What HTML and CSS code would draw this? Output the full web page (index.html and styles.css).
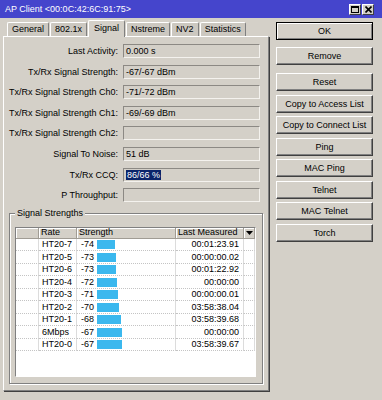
FILE: index.html
```html
<!DOCTYPE html>
<html lang="en">
<head>
    <meta charset="UTF-8">
    <meta name="viewport" content="width=device-width, initial-scale=1.0">
    <title>AP Client</title>
    <link rel="stylesheet" href="styles.css">
</head>
<body>
    <div class="window">
        <div class="titlebar">
            <span class="title">AP Client &lt;00:0C:42:6C:91:75&gt;</span>
            <span class="tb-btns">
                <span class="tb-btn"><svg width="8" height="7" viewBox="0 0 8 7"><rect x="0.5" y="0.5" width="7" height="6" fill="none" stroke="#000"/><line x1="0" y1="1.5" x2="8" y2="1.5" stroke="#000"/></svg></span>
                <span class="tb-btn"><svg width="7" height="7" viewBox="0 0 7 7"><path d="M0.5 0.5 L6.5 6.5 M6.5 0.5 L0.5 6.5" stroke="#000" stroke-width="1.6"/></svg></span>
            </span>
        </div>

        <div class="main">
            <div class="left">
                <div class="tabs">
                    <span class="tab">General</span>
                    <span class="tab">802.1x</span>
                    <span class="tab active">Signal</span>
                    <span class="tab">Nstreme</span>
                    <span class="tab">NV2</span>
                    <span class="tab">Statistics</span>
                </div>

                <div class="panel">
                    <div class="form">
                        <label>Last Activity:</label>
                        <div class="field">0.000 s</div>
                        <label>Tx/Rx Signal Strength:</label>
                        <div class="field">-67/-67 dBm</div>
                        <label>Tx/Rx Signal Strength Ch0:</label>
                        <div class="field">-71/-72 dBm</div>
                        <label>Tx/Rx Signal Strength Ch1:</label>
                        <div class="field">-69/-69 dBm</div>
                        <label>Tx/Rx Signal Strength Ch2:</label>
                        <div class="field"></div>
                        <label>Signal To Noise:</label>
                        <div class="field">51 dB</div>
                        <label>Tx/Rx CCQ:</label>
                        <div class="field"><span class="selected">86/66 %</span></div>
                        <label>P Throughput:</label>
                        <div class="field"></div>
                    </div>

                    <fieldset class="group">
                        <legend>Signal Strengths</legend>
                        <div class="list">
                            <table class="grid">
                                <colgroup>
                                    <col style="width:23px">
                                    <col style="width:38px">
                                    <col style="width:99px">
                                    <col style="width:68px">
                                    <col style="width:11px">
                                </colgroup>
                                <thead>
                                    <tr>
                                        <th></th>
                                        <th>Rate</th>
                                        <th>Strength</th>
                                        <th>Last Measured</th>
                                        <th class="menu"><svg width="7" height="4" viewBox="0 0 7 4"><path d="M0 0 H7 L3.5 4 Z" fill="#000"/></svg></th>
                                    </tr>
                                </thead>
                                <tbody>
                                    <tr><td></td><td>HT20-7</td><td><span class="val">-74</span><span class="bar" style="width:18px"></span></td><td class="time">00:01:23.91</td><td></td></tr>
                                    <tr><td></td><td>HT20-5</td><td><span class="val">-73</span><span class="bar" style="width:19px"></span></td><td class="time">00:00:00.02</td><td></td></tr>
                                    <tr><td></td><td>HT20-6</td><td><span class="val">-73</span><span class="bar" style="width:19px"></span></td><td class="time">00:01:22.92</td><td></td></tr>
                                    <tr><td></td><td>HT20-4</td><td><span class="val">-72</span><span class="bar" style="width:20px"></span></td><td class="time">00:00:00</td><td></td></tr>
                                    <tr><td></td><td>HT20-3</td><td><span class="val">-71</span><span class="bar" style="width:21px"></span></td><td class="time">00:00:00.01</td><td></td></tr>
                                    <tr><td></td><td>HT20-2</td><td><span class="val">-70</span><span class="bar" style="width:22px"></span></td><td class="time">03:58:38.04</td><td></td></tr>
                                    <tr><td></td><td>HT20-1</td><td><span class="val">-68</span><span class="bar" style="width:24px"></span></td><td class="time">03:58:39.68</td><td></td></tr>
                                    <tr><td></td><td>6Mbps</td><td><span class="val">-67</span><span class="bar" style="width:25px"></span></td><td class="time">00:00:00</td><td></td></tr>
                                    <tr><td></td><td>HT20-0</td><td><span class="val">-67</span><span class="bar" style="width:25px"></span></td><td class="time">03:58:39.67</td><td></td></tr>
                                </tbody>
                            </table>
                        </div>
                    </fieldset>
                </div>
            </div>

            <div class="buttons">
                <button class="btn ok">OK</button>
                <button class="btn remove">Remove</button>
                <button class="btn">Reset</button>
                <button class="btn">Copy to Access List</button>
                <button class="btn">Copy to Connect List</button>
                <button class="btn">Ping</button>
                <button class="btn">MAC Ping</button>
                <button class="btn">Telnet</button>
                <button class="btn">MAC Telnet</button>
                <button class="btn">Torch</button>
            </div>
        </div>
    </div>
</body>
</html>
```

FILE: styles.css
```css
* {
    margin: 0;
    padding: 0;
    box-sizing: border-box;
}

body {
    background: #d4d0c8;
    font-family: "Liberation Sans", Arial, sans-serif;
    font-size: 9px;
    color: #000;
}

.window {
    width: 382px;
    height: 400px;
    display: flex;
    flex-direction: column;
    background: #d4d0c8;
}

/* title bar */
.titlebar {
    height: 18px;
    background: #4545cc;
    color: #fff;
    display: flex;
    align-items: center;
    justify-content: space-between;
    padding: 0 8px 0 5px;
}

.tb-btns {
    display: flex;
    gap: 1px;
}

.tb-btn {
    width: 12px;
    height: 11px;
    background: #d4d0c8;
    border: 1px solid;
    border-color: #fff #404040 #404040 #fff;
    display: flex;
    align-items: center;
    justify-content: center;
}

.main {
    flex: 1;
    display: flex;
}

.left {
    width: 269px;
    padding-left: 3px;
    display: flex;
    flex-direction: column;
}

/* tabs */
.tabs {
    height: 18px;
    display: flex;
    align-items: flex-end;
    gap: 1px;
    padding-left: 4px;
}

.tab {
    height: 14px;
    line-height: 12px;
    padding: 0 4px;
    background: #ccc8c0;
    border: 1px solid;
    border-color: #fff #808080 transparent #fff;
    border-bottom: none;
    border-radius: 2px 2px 0 0;
}

.tab.active {
    height: 17px;
    line-height: 14px;
    padding: 0 5px;
    margin-bottom: -1px;
    background: #d4d0c8;
    position: relative;
    z-index: 1;
}

.panel {
    height: 355px;
    border: 1px solid;
    border-color: #fff #808080 #808080 #fff;
    box-shadow: 1px 1px 0 #404040;
}

/* read-only fields */
.form {
    display: grid;
    grid-template-columns: 116px 137px;
    column-gap: 3px;
    row-gap: 6.6px;
    align-items: center;
    padding-top: 7px;
}

.form label {
    text-align: right;
    padding-right: 2px;
    white-space: nowrap;
}

.field {
    height: 14px;
    line-height: 12px;
    padding: 0 2px;
    border: 1px solid;
    border-color: #8c8984 #f4f2ee #f4f2ee #8c8984;
    background: #d4d0c8;
    white-space: nowrap;
}

.selected {
    background: #0a246a;
    color: #fff;
    padding: 0 1px;
}

/* signal strengths group */
.group {
    width: 254px;
    margin: 6px 0 0 5px;
    padding: 7.5px 6px 6px 5px;
    border: 1px solid #808080;
    box-shadow: inset 1px 1px 0 #fff, 1px 1px 0 #fff;
}

.group legend {
    padding: 0 2px;
    line-height: 11px;
    background: #d4d0c8;
}

.list {
    height: 150px;
    background: #fff;
    border: 1px solid;
    border-color: #808080 #fff #fff #808080;
}

.grid {
    width: 239px;
    table-layout: fixed;
    border-collapse: separate;
    border-spacing: 0;
}

.grid th {
    height: 11px;
    line-height: 9px;
    padding: 0 2px;
    background: #d4d0c8;
    font-weight: normal;
    text-align: left;
    white-space: nowrap;
    border-right: 1px solid #a09c94;
    border-bottom: 1px solid #a09c94;
    box-shadow: inset 1px 1px 0 #fff;
}

.grid th.menu {
    padding: 0;
    text-align: center;
}

.grid td {
    height: 12.5px;
    line-height: 10px;
    padding: 0 3px;
    white-space: nowrap;
    overflow: hidden;
    border-right: 1px solid #dcdcdc;
    border-bottom: 1px dotted #c4c4c4;
}

.grid td.time {
    text-align: right;
    padding-right: 4px;
}

.val {
    display: inline-block;
    width: 17px;
    padding-left: 1px;
}

.bar {
    display: inline-block;
    height: 9px;
    vertical-align: middle;
    background: #3bb8ee;
}

/* right hand buttons */
.buttons {
    display: flex;
    flex-direction: column;
    gap: 3.5px;
    padding-top: 4px;
    margin-left: 7px;
}

.btn {
    width: 97px;
    height: 18px;
    padding: 0;
    font: inherit;
    color: #000;
    background: #d4d0c8;
    border: 1px solid;
    border-color: #fff #404040 #404040 #fff;
    box-shadow: inset -1px -1px 0 #808080;
}

.btn.ok {
    border-color: #000;
    box-shadow: inset 1px 1px 0 #fff, inset -1px -1px 0 #808080;
    margin-bottom: 3.5px;
}

.btn.remove {
    margin-bottom: 4.5px;
}
```
